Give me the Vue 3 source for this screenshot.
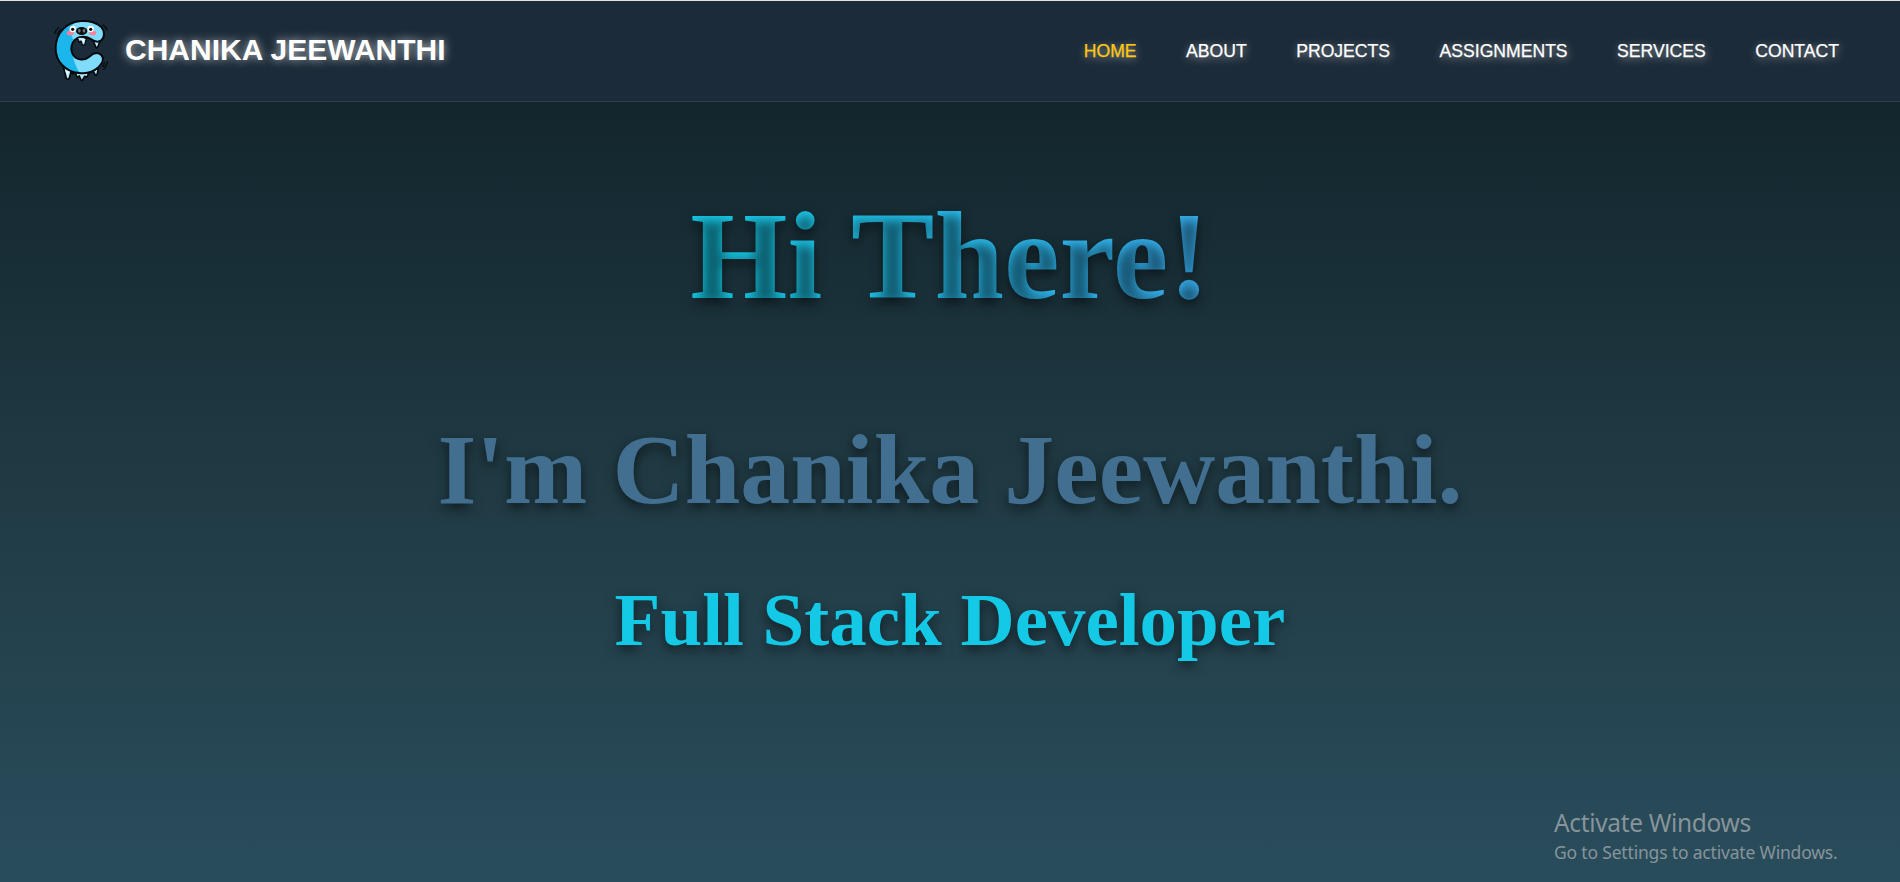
<script setup>
const links = ['HOME', 'ABOUT', 'PROJECTS', 'ASSIGNMENTS', 'SERVICES', 'CONTACT']
</script>

<template>
  <div class="page">
    <header class="nav">
      <a class="brand">
        <svg class="logo" viewBox="36 54 180 198" aria-hidden="true">
          <g stroke="#050a0e" stroke-width="5" stroke-linejoin="round" fill="#b5e6f8">
            <path d="M70 200 L79 235 Q83 241 88 234 L93 216 L98 222 L102 208 Z" />
            <path d="M105 218 L112 232 L118 228 L123 240 Q127 243 130 236 L134 229 L141 231 L147 218 Z" />
            <path d="M157 210 L166 225 Q170 228 172 220 L175 206 Z" />
            <path d="M160 124 L168 142 Q171 146 174 140 L180 122 Z" />
          </g>
          <path
            d="M123 63 C148 61 172 69 184 81 C194 92 195 112 184 121 C174 129 160 123 150 116 C138 108 118 108 105 119 C94 130 91 147 97 160 C106 181 132 184 148 170 C159 160 174 155 184 165 C194 176 187 190 175 202 C159 217 138 222 117 219 C76 215 46 184 47 143 C48 98 80 66 123 63 Z"
            fill="#7fdcfa"
          />
          <path
            d="M123 63 C102 66 94 75 92 91 C90 103 96 110 102 121 C94 130 91 147 97 160 C100 180 108 202 119 219 C76 215 46 184 47 143 C48 98 80 66 123 63 Z"
            fill="#1bb7ec"
          />
          <path
            d="M123 63 C148 61 172 69 184 81 C194 92 195 112 184 121 C174 129 160 123 150 116 C138 108 118 108 105 119 C94 130 91 147 97 160 C106 181 132 184 148 170 C159 160 174 155 184 165 C194 176 187 190 175 202 C159 217 138 222 117 219 C76 215 46 184 47 143 C48 98 80 66 123 63 Z"
            fill="none" stroke="#050a0e" stroke-width="6"
          />
          <path d="M112 113 L118 127 L123 123 L127 134 Q132 138 135 131 L139 116 Q125 109 112 113 Z" fill="#b5e6f8" stroke="#050a0e" stroke-width="4" />
          <path d="M121 118 L135 117 L132 130 L127 124 Z M75 211 L88 214 L84 231 Z" fill="#dcf5fd" />
          <ellipse cx="91" cy="99" rx="11" ry="7" fill="#ff7f9b" />
          <ellipse cx="158" cy="99" rx="11" ry="7" fill="#ff7f9b" />
          <circle cx="98" cy="87" r="9.5" fill="#fff" />
          <circle cx="152" cy="87" r="9.5" fill="#fff" />
          <circle cx="98" cy="88" r="5" fill="#111" />
          <circle cx="152" cy="88" r="5" fill="#111" />
          <ellipse cx="125" cy="93" rx="17" ry="12" fill="#07090b" />
          <ellipse cx="118" cy="92" rx="4" ry="6" fill="#6d7276" />
          <ellipse cx="132" cy="92" rx="4" ry="6" fill="#6d7276" />
          <path d="M44 100 Q48 89 56 82 M52 102 Q56 94 62 89 M189 75 Q197 80 201 89 M202 185 Q201 198 191 208 M193 187 Q193 193 188 200" fill="none" stroke="#050a0e" stroke-width="3.5" stroke-linecap="round" />
        </svg>
        <span class="name">CHANIKA JEEWANTHI</span>
      </a>
      <nav class="links">
        <a v-for="(link, i) in links" :key="link" class="link" :class="{ active: i === 0 }">{{ link }}</a>
      </nav>
    </header>

    <main class="hero">
      <h1 class="greeting"><span class="clip">Hi There!</span></h1>
      <h2 class="intro">I'm Chanika Jeewanthi.</h2>
      <h3 class="role">Full Stack Developer</h3>
    </main>

    <aside class="watermark">
      <p class="wm-title">Activate Windows</p>
      <p class="wm-text">Go to Settings to activate Windows.</p>
    </aside>
  </div>
</template>

<style>
body {
  margin: 0;
  overflow: hidden;
}
</style>

<style scoped>
.page {
  box-sizing: border-box;
  height: 882px;
  overflow: hidden;
  border-top: 1px solid #e6dfe0;
  background: linear-gradient(to bottom, #0f2027, #203a43 54%, #2b5061 108%);
}
.nav {
  box-sizing: border-box;
  display: flex;
  align-items: center;
  justify-content: space-between;
  height: 101px;
  padding: 0 61px 0 52px;
  background: #1c2b39;
  border-bottom: 1px solid #2d3f4e;
  font-family: "Liberation Sans", Arial, sans-serif;
}
.brand {
  display: flex;
  align-items: center;
  gap: 13px;
}
.logo {
  width: 60px;
  height: 66px;
}
.name {
  padding-bottom: 2px;
  font-size: 30px;
  font-weight: 700;
  color: #fff;
  text-shadow: 0 0 10px rgba(255, 255, 255, 0.7);
}
.links {
  display: flex;
  gap: 49.5px;
}
.link {
  font-size: 17.6px;
  color: #fff;
  -webkit-text-stroke: 0.25px currentColor;
  text-shadow: 1px 2px 8px rgba(255, 255, 255, 0.6);
}
.active {
  color: #ffc90d;
}
.hero {
  text-align: center;
  font-family: "Liberation Serif", "Times New Roman", serif;
}
.hero h1,
.hero h2,
.hero h3 {
  margin: 0;
  font-weight: 700;
  text-shadow: 0 5px 12px rgba(0, 0, 0, 0.55);
}
.greeting {
  padding-top: 82px;
  font-size: 125px;
  line-height: 144px;
}
.clip {
  background: linear-gradient(90deg, #15d2ee, #3ab2f6);
  -webkit-background-clip: text;
  background-clip: text;
  color: transparent;
}
.intro {
  padding-top: 85px;
  font-size: 100px;
  line-height: 114px;
  color: #426f90;
}
.role {
  padding-top: 50px;
  font-size: 75px;
  line-height: 86px;
  color: #14c9e6;
}
.watermark {
  position: absolute;
  left: 1554px;
  top: 806px;
  font-family: "Noto Sans", "Open Sans", sans-serif;
  color: #87949a;
  white-space: nowrap;
}
.watermark p {
  margin: 0;
}
.wm-title {
  font-size: 24.5px;
  line-height: 34px;
  letter-spacing: -0.35px;
}
.wm-text {
  font-size: 17.5px;
  line-height: 24px;
  letter-spacing: -0.18px;
}
</style>
